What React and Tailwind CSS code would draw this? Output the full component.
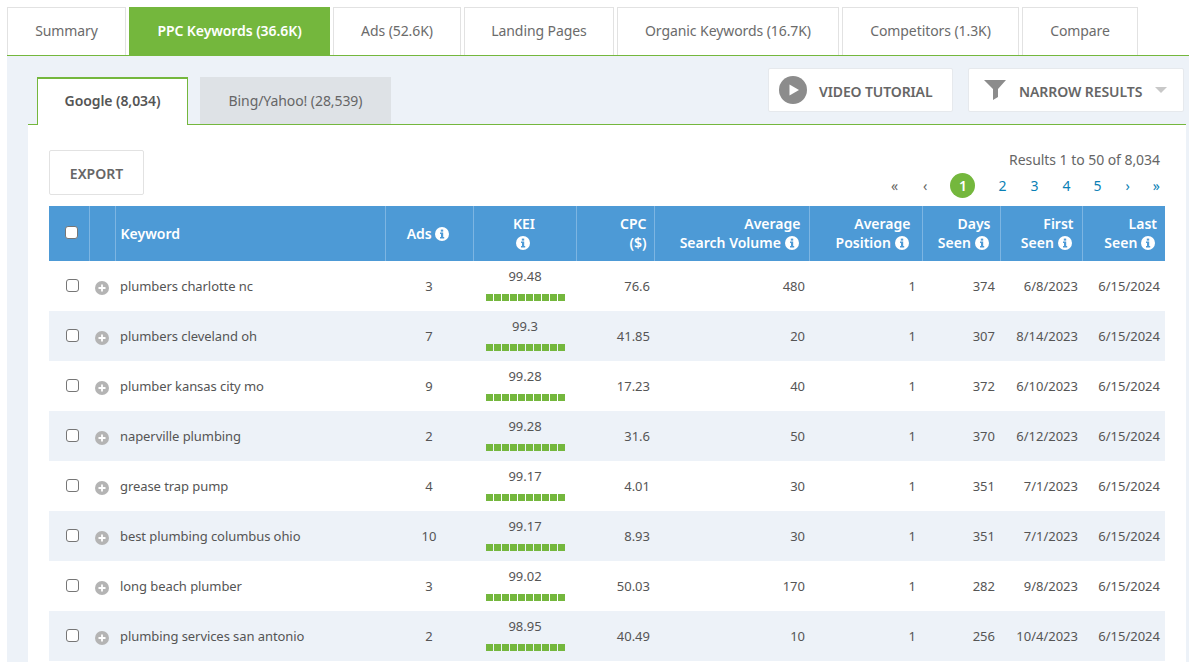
import React from "react";

const tabs = [
  ["Summary", "w-[119px]"],
  ["PPC Keywords (36.6K)", "w-[201px]", true],
  ["Ads (52.6K)", "w-[128px]"],
  ["Landing Pages", "w-[150px]"],
  ["Organic Keywords (16.7K)", "w-[222px]"],
  ["Competitors (1.3K)", "w-[177px]"],
  ["Compare", "w-[116px]"],
];

const rows = [
  ["plumbers charlotte nc", 3, "99.48", "76.6", 480, 1, 374, "6/8/2023"],
  ["plumbers cleveland oh", 7, "99.3", "41.85", 20, 1, 307, "8/14/2023"],
  ["plumber kansas city mo", 9, "99.28", "17.23", 40, 1, 372, "6/10/2023"],
  ["naperville plumbing", 2, "99.28", "31.6", 50, 1, 370, "6/12/2023"],
  ["grease trap pump", 4, "99.17", "4.01", 30, 1, 351, "7/1/2023"],
  ["best plumbing columbus ohio", 10, "99.17", "8.93", 30, 1, 351, "7/1/2023"],
  ["long beach plumber", 3, "99.02", "50.03", 170, 1, 282, "9/8/2023"],
  ["plumbing services san antonio", 2, "98.95", "40.49", 10, 1, 256, "10/4/2023"],
];

function Info() {
  return (
    <svg viewBox="0 0 14 14" className="inline-block w-[14px] h-[14px] align-[-2px] mr-[2px]">
      <circle cx="7" cy="7" r="7" fill="#fff" />
      <rect x="5.8" y="2.6" width="2.4" height="2" fill="#4d9ad6" />
      <path d="M5 5.6h3.2v4.4h1v1.4H5V10h1V7H5z" fill="#4d9ad6" />
    </svg>
  );
}

function Plus() {
  return (
    <svg viewBox="0 0 14 14" className="w-[14px] h-[14px]">
      <circle cx="7" cy="7" r="7" fill="#b4b4b4" />
      <path d="M7 3.5v7M3.5 7h7" stroke="#fff" strokeWidth="1.8" />
    </svg>
  );
}

function Check() {
  return <span className="block w-[13px] h-[13px] rounded-[3px] border border-[#767676] bg-white" />;
}

const th = "border-l border-[#7db5e2] first:border-l-0 align-middle font-semibold text-[14px] leading-[19px] text-white";
const base = "text-[13px] text-[#555] align-middle";
const td = `${base} pt-[2px]`;

export default function App() {
  return (
    <div className="w-[1189px] h-[662px] overflow-hidden bg-white font-['Noto_Sans','Open_Sans',sans-serif]">
      <div className="flex gap-[3px] ml-[7px] pt-[7px] h-[56px] border-b border-[#74b73d]">
        {tabs.map(([label, w, active]) => (
          <div
            key={label}
            className={`${w} h-[48px] pb-[2px] flex items-center justify-center text-[14px] tracking-[-0.08px] ${
              active
                ? "bg-[#74b73d] text-white font-semibold"
                : "bg-white text-[#6b6b6b] border border-b-0 border-[#e2e2e2]"
            }`}
          >
            {label}
          </div>
        ))}
      </div>
      <div className="ml-[7px] h-[606px] bg-[#edf2f8] pl-[21px] pr-[3px]">
        <div className="h-[68px] pl-[9px] flex items-end">
          <div className="w-[151px] h-[48px] pb-[4px] bg-white border-t-2 border-x border-[#74b73d] flex items-center justify-center text-[14px] font-semibold text-[#555] tracking-[-0.08px] translate-y-[1px] z-10">
            Google (8,034)
          </div>
          <div className="w-[191px] h-[47px] ml-[12px] bg-[#dee2e6] flex items-center justify-center text-[14px] text-[#666] tracking-[-0.08px]">
            Bing/Yahoo! (28,539)
          </div>
          <div className="ml-auto mr-[2px] mb-[12px] flex gap-[15px]">
            <div className="w-[185px] h-[44px] bg-white border border-[#e6e9ed] rounded-[2px] flex items-center pl-[10px] text-[14px] font-semibold text-[#666] tracking-[-0.12px]">
              <svg viewBox="0 0 28 28" className="w-[28px] h-[28px] mr-[12px]">
                <circle cx="14" cy="14" r="14" fill="#8c8c8c" />
                <path d="M10.5 8.5 20 14l-9.5 5.5z" fill="#fff" />
              </svg>
              <span className="pt-[2px]">VIDEO TUTORIAL</span>
            </div>
            <div className="w-[216px] h-[44px] bg-white border border-[#e6e9ed] rounded-[2px] flex items-center pl-[15px] text-[14px] font-semibold text-[#666] tracking-[-0.08px]">
              <svg viewBox="0 0 22 20" className="w-[22px] h-[20px] mr-[13px] -mt-[1px]">
                <path d="M0 0h22l-8 9v8l-5 3V9z" fill="#8c8c8c" />
              </svg>
              <span className="pt-[2px]">NARROW RESULTS</span>
              <svg viewBox="0 0 12 6" className="w-[12px] h-[6px] ml-[13px]">
                <path d="M0 0h12L6 6z" fill="#c8c8c8" />
              </svg>
            </div>
          </div>
        </div>
        <div className="bg-white h-[538px] border-t border-[#74b73d] px-[21px] overflow-hidden">
          <div className="h-[81px] flex justify-between pt-[25px]">
            <div className="w-[95px] h-[45px] pt-[1px] border border-[#e2e2e2] rounded-[2px] flex items-center justify-center text-[14px] font-semibold text-[#666]">
              EXPORT
            </div>
            <div className="text-right mr-[5px]">
              <div className="text-[14px] leading-[20px] text-[#666] tracking-[-0.05px]">Results 1 to 50 of 8,034</div>
              <div className="flex items-center justify-end text-[14px] mt-[2px] h-[26px] text-[#0a7fb5]">
                <span className="text-[#666] mr-[25px]">«</span>
                <span className="text-[#666] mr-[23px]">‹</span>
                <span className="w-[25px] h-[25px] mr-[23px] rounded-full bg-[#74b73d] text-white font-semibold flex items-center justify-center">1</span>
                <span className="mr-[24px]">2</span>
                <span className="mr-[24px]">3</span>
                <span className="mr-[23px]">4</span>
                <span className="mr-[24px]">5</span>
                <span className="mr-[23px]">›</span>
                <span>»</span>
              </div>
            </div>
          </div>
          <table className="w-[1116px] table-fixed border-collapse">
            <colgroup>
              <col className="w-[40px]" />
              <col className="w-[26px]" />
              <col className="w-[270px]" />
              <col className="w-[88px]" />
              <col className="w-[103px]" />
              <col className="w-[78px]" />
              <col className="w-[155px]" />
              <col className="w-[113px]" />
              <col className="w-[78px]" />
              <col className="w-[82px]" />
              <col className="w-[83px]" />
            </colgroup>
            <thead>
              <tr className="h-[55px] bg-[#4d9ad6]">
                <th className={th}>
                  <div className="flex justify-center -mt-[2px] ml-[6px]"><Check /></div>
                </th>
                <th className={th}></th>
                <th className={`${th} text-left pl-[5px]`}>Keyword</th>
                <th className={`${th} text-center`}>Ads <Info /></th>
                <th className={`${th} text-center pr-[1px] pb-[2px]`}>KEI<br /><Info /></th>
                <th className={`${th} text-right pr-[7px] pb-[2px]`}>CPC<br />($)</th>
                <th className={`${th} text-right pr-[8px] pb-[2px]`}>Average<br />Search Volume <Info /></th>
                <th className={`${th} text-right pr-[11px] pb-[2px]`}>Average<br />Position <Info /></th>
                <th className={`${th} text-right pr-[9px] pb-[2px]`}>Days<br />Seen <Info /></th>
                <th className={`${th} text-right pr-[8px] pb-[2px]`}>First<br />Seen <Info /></th>
                <th className={`${th} text-right pr-[8px] pb-[2px]`}>Last<br />Seen <Info /></th>
              </tr>
            </thead>
            <tbody>
              {rows.map((r, i) => (
                <tr key={r[0]} className={`h-[50px] ${i % 2 ? "bg-[#edf2f8]" : "bg-white"}`}>
                  <td className={td}>
                    <div className="flex justify-center -mt-[4px] ml-[6px]"><Check /></div>
                  </td>
                  <td className={td}>
                    <div className="flex justify-center pt-[1px] -ml-[1px]"><Plus /></div>
                  </td>
                  <td className={`${td} pl-[5px] text-[#6b6b6b] tracking-[-0.07px]`}>{r[0]}</td>
                  <td className={`${td} text-center`}>{r[1]}</td>
                  <td className={`${base} text-center pb-[2px]`}>
                    <div className="leading-[18px] -mt-[3px] pl-[1px]">{r[2]}</div>
                    <div className="flex justify-center gap-px mt-[9px] pl-[1px]">
                      {Array.from({ length: 10 }).map((_, k) => (
                        <span key={k} className="w-[7px] h-[7px] bg-[#74b73d]" />
                      ))}
                    </div>
                  </td>
                  <td className={`${td} text-right pr-[4px]`}>{r[3]}</td>
                  <td className={`${td} text-right pr-[4px]`}>{r[4]}</td>
                  <td className={`${td} text-right pr-[6px]`}>{r[5]}</td>
                  <td className={`${td} text-right pr-[5px]`}>{r[6]}</td>
                  <td className={`${td} text-right pr-[4px]`}>{r[7]}</td>
                  <td className={`${td} text-right pr-[5px]`}>6/15/2024</td>
                </tr>
              ))}
            </tbody>
          </table>
        </div>
      </div>
    </div>
  );
}
